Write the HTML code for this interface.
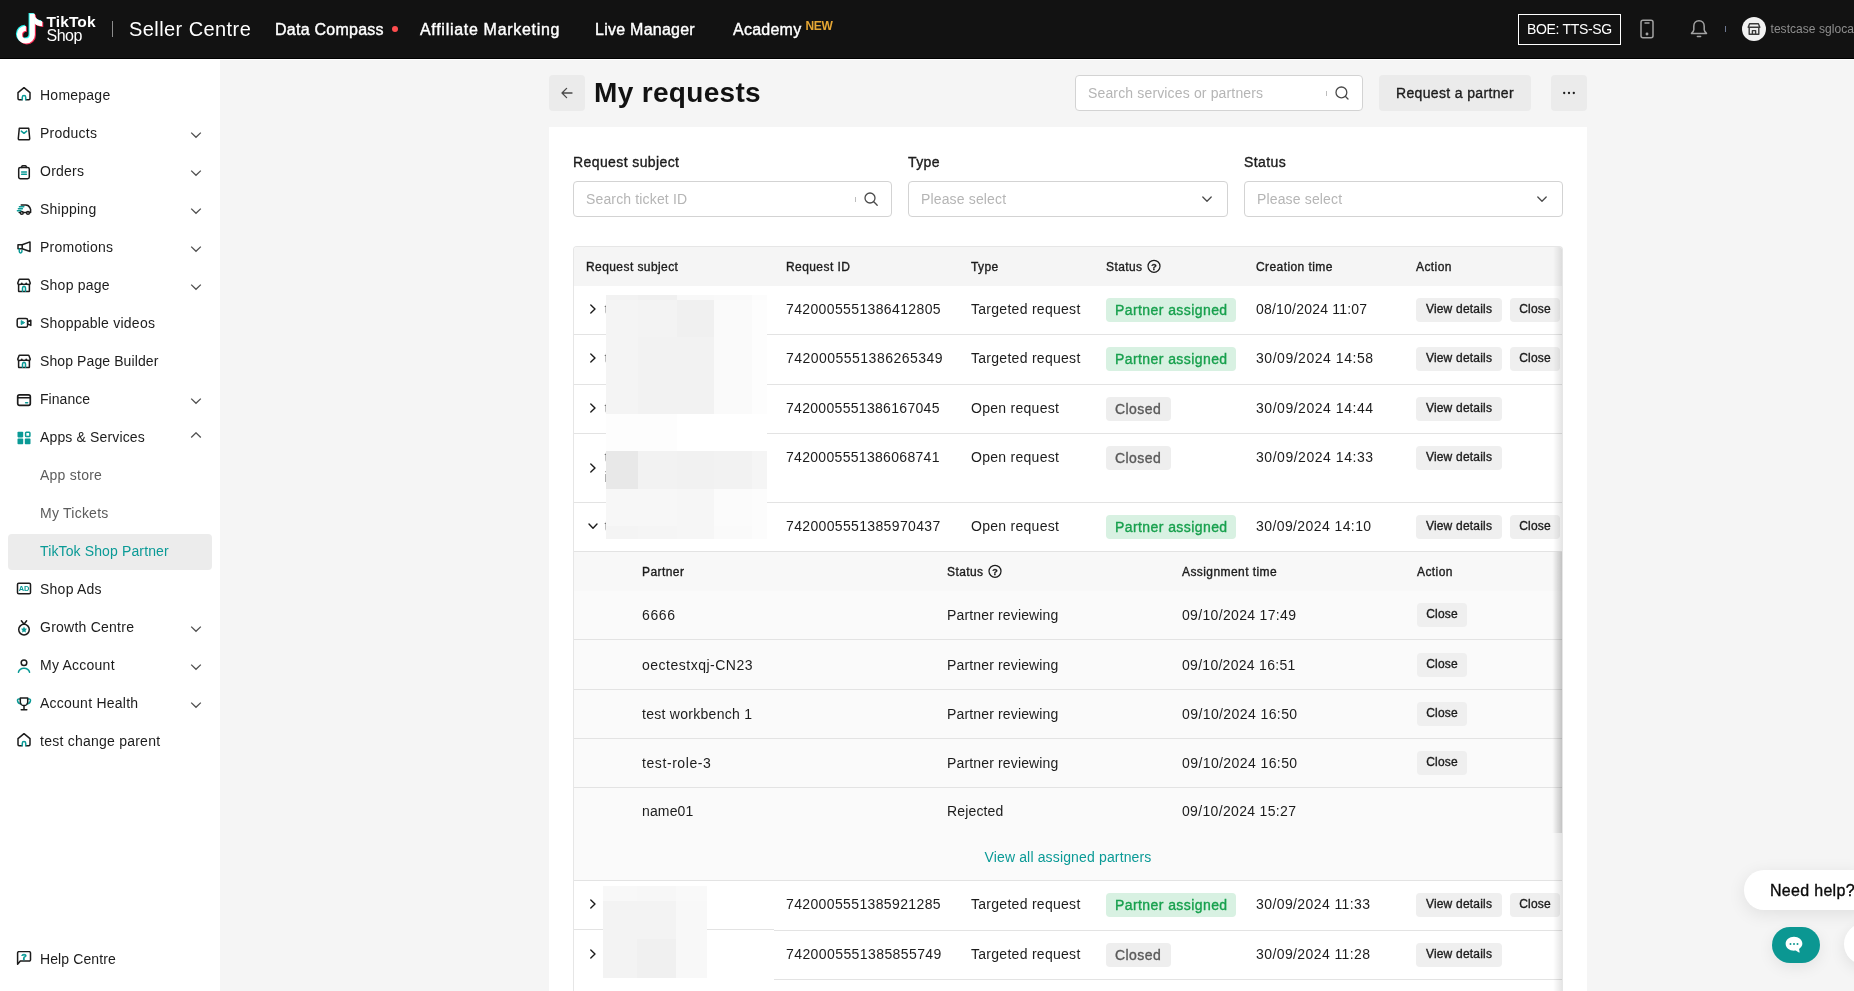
<!DOCTYPE html>
<html lang="en">
<head>
<meta charset="utf-8">
<title>My requests - TikTok Shop Seller Centre</title>
<style>
*{box-sizing:border-box;margin:0;padding:0}
html,body{width:1854px;height:991px;overflow:hidden;background:#f5f5f5}
body>div{will-change:transform}
body{font-family:"Liberation Sans",sans-serif;font-size:14px;color:#1c1c1c;position:relative}
.abs{position:absolute}
.m{-webkit-text-stroke:.35px currentColor}
/* header */
#hdr{position:absolute;left:0;top:0;width:1854px;height:59px;background:#121212;border-bottom:1px solid #000}
#hdr .t{position:absolute;color:#fff;white-space:nowrap}
/* sidebar */
#side{position:absolute;left:0;top:59px;width:220px;height:932px;background:#fff}
.si{position:absolute;left:0;width:220px;height:38px}
.si .lbl{position:absolute;left:40px;top:0;line-height:38px;font-size:14px;color:#1c1c1c;white-space:nowrap;letter-spacing:.1px}
.si svg.ic{position:absolute;left:16px;top:11px;width:16px;height:16px}
.si svg.ch{position:absolute;left:190px;top:14px;width:12px;height:12px}
.si.sub .lbl{color:#5c5c5c}
.si.sel{left:8px;width:204px;height:36px;margin-top:1.500px;background:#ececec;border-radius:4px}
.si.sel .lbl{left:32px;top:-.5px;line-height:36px;color:#0a9a96}
/* main */
#card{position:absolute;left:549px;top:127px;width:1038px;height:880px;background:#fff}
.btn{position:absolute;background:#ebebeb;border-radius:4px;color:#1c1c1c;text-align:center;white-space:nowrap}
.inp{position:absolute;background:#fff;border:1px solid #d3d3d3;border-radius:4px;height:36px}
.inp .ph{position:absolute;left:12px;top:0;line-height:34px;color:#b5b5b5;font-size:14px;white-space:nowrap;letter-spacing:.15px}
.flabel{position:absolute;top:153px;font-size:14px;line-height:18px;color:#1c1c1c;white-space:nowrap;letter-spacing:.4px}
/* table */
#tbl{position:absolute;left:573px;top:246px;width:990px;height:760px;border-left:1px solid #e6e6e6;border-right:1px solid #e6e6e6;border-top:1px solid #e6e6e6;border-radius:4px 4px 0 0;overflow:hidden;background:#fff}
.th{position:absolute;font-size:12px;line-height:16px;color:#1c1c1c;white-space:nowrap;letter-spacing:.42px}
.row{position:absolute;left:0;width:988px;border-bottom:1px solid #e3e3e3}
.c{position:absolute;white-space:nowrap;font-size:14px;line-height:20px;color:#1c1c1c}
.tag{position:absolute;height:24px;border-radius:4px;font-size:14px;line-height:24px;padding:0 8px 0 9px;white-space:nowrap;letter-spacing:.42px}
.tag.g{background:#d8f1e2;color:#17a04d}
.tag.x{background:#eeeeee;color:#5a5a5a;padding-right:9.500px}
.sb{position:absolute;height:24px;border-radius:4px;background:#efefef;font-size:12px;line-height:23px;color:#1c1c1c;text-align:center;white-space:nowrap;letter-spacing:.2px}
</style>
</head>
<body>
<div id="hdr">
<svg class="abs" style="left:14.250px;top:11.400px" width="31.800" height="35.500" viewBox="-2 -2 34 38">
<g fill="none" stroke-linecap="butt" stroke-linejoin="round" stroke-width="5.600">
<path id="nt" d="M17.5 1v22.300a6.800 6.800 0 1 1-6.800-6.800" stroke="#25f4ee" transform="translate(-1.1,-.9)"/>
<path d="M17.500 1v22.300a6.800 6.800 0 1 1-6.800-6.800" stroke="#fe2c55" transform="translate(1.1,.9)"/>
</g>
<path d="M19.800 1c.4 4.200 3.400 7.400 8.400 7.900v5.400c-3.400 0-6.400-1.200-8.400-3z" fill="#25f4ee" transform="translate(-1.1,-.9)"/>
<path d="M19.800 1c.4 4.200 3.400 7.400 8.400 7.900v5.400c-3.400 0-6.400-1.200-8.400-3z" fill="#fe2c55" transform="translate(1.100,.9)"/>
<path d="M17.500 1v22.300a6.800 6.800 0 1 1-6.800-6.800" stroke="#fff" fill="none" stroke-width="5.600"/>
<path d="M19.800 1c.4 4.200 3.400 7.400 8.400 7.900v5.400c-3.400 0-6.400-1.200-8.400-3z" fill="#fff"/>
</svg>
<div class="t" style="left:46.500px;top:13px;font-size:15.500px;line-height:17px;font-weight:bold;letter-spacing:.1px">TikTok</div>
<div class="t" style="left:46.500px;top:27px;font-size:16px;line-height:17px;letter-spacing:-.5px">Shop</div>
<div class="abs" style="left:112px;top:21px;width:1px;height:16px;background:#8c8c8c"></div>
<div class="t" style="left:129px;top:17px;font-size:20px;line-height:24px;letter-spacing:.42px">Seller Centre</div>
<div class="t" style="left:275px;top:20px;font-size:16px;line-height:20px;letter-spacing:.25px;-webkit-text-stroke:.4px #fff">Data Compass</div>
<div class="abs" style="left:392px;top:26px;width:6px;height:6px;border-radius:3px;background:#ff4d4f"></div>
<div class="t" style="left:420px;top:20px;font-size:16px;line-height:20px;letter-spacing:.7px;-webkit-text-stroke:.4px #fff">Affiliate Marketing</div>
<div class="t" style="left:595px;top:20px;font-size:16px;line-height:20px;letter-spacing:.25px;-webkit-text-stroke:.4px #fff">Live Manager</div>
<div class="t" style="left:733px;top:20px;font-size:16px;line-height:20px;letter-spacing:.25px;-webkit-text-stroke:.4px #fff">Academy</div>
<div class="t" style="left:805.500px;top:19.500px;font-size:12px;line-height:13px;font-weight:bold;color:#e5a634;letter-spacing:-.3px">NEW</div>
<div class="abs" style="left:1518px;top:14px;width:103px;height:31px;border:1px solid #fff"></div>
<div class="t" style="left:1527px;top:19px;font-size:14px;line-height:20px;letter-spacing:-.32px">BOE: TTS-SG</div>
<svg class="abs" style="left:1639px;top:19px" width="16" height="20" viewBox="0 0 16 20" fill="none" stroke="#a3a3a3" stroke-width="1.5"><rect x="2" y="1.2" width="12" height="17.6" rx="2"/><path d="M6 4h4" stroke-linecap="round"/><circle cx="8" cy="15" r=".7" fill="#a3a3a3"/></svg>
<svg class="abs" style="left:1689px;top:19px" width="20" height="20" viewBox="0 0 20 20" fill="none" stroke="#a3a3a3" stroke-width="1.5" stroke-linejoin="round" stroke-linecap="round"><path d="M10 1.800c-3.200 0-5.200 2.400-5.200 5.400v3.600c0 1.400-1.200 2.600-2.300 3.600h15c-1.100-1-2.300-2.200-2.300-3.600V7.200c0-3-2-5.400-5.200-5.400z"/><path d="M8.400 17.600h3.200"/></svg>
<div class="abs" style="left:1725px;top:26px;width:1px;height:6px;background:#6d7790"></div>
<div class="abs" style="left:1742px;top:17px;width:24px;height:24px;border-radius:12px;background:#f2f2f2"></div>
<svg class="abs" style="left:1747px;top:22px" width="14" height="14" viewBox="0 0 14 14" fill="none" stroke="#3a3a3a" stroke-width="1.4" stroke-linejoin="round"><path d="M2.200 6v6.300h9.600V6"/><path d="M1.200 5.300 2.600 1.700h8.800l1.400 3.600z"/><path d="M5.400 12.300V8.600h3.200v3.700"/></svg>
<div class="t" style="left:1770.500px;top:19px;font-size:12px;line-height:20px;color:#8e8e8e;letter-spacing:.05px">testcase sglocal</div>
</div>
<div id="side">
<div class="si" style="top:17px"><svg class="ic" style="top:10.2px" viewBox="0 0 16 16" fill="none" stroke="#1c1c1c" stroke-width="1.500" stroke-linecap="round" stroke-linejoin="round"><path d="M6 13.700H3.200a1.200 1.200 0 0 1-1.200-1.200V6.700L8 1.700l6 5v5.800a1.200 1.200 0 0 1-1.200 1.200H10"/><path d="M6.300 13.700v-2.500a1.700 1.700 0 0 1 3.400 0v2.500" stroke="#0a9a96"/></svg><span class="lbl" style="letter-spacing:0.24px">Homepage</span></div>
<div class="si" style="top:55px"><svg class="ic" style="top:12px" viewBox="0 0 16 16" fill="none" stroke="#1c1c1c" stroke-width="1.500" stroke-linecap="round" stroke-linejoin="round"><path d="M3.300 2.300h9.400l1 10.200a1.200 1.200 0 0 1-1.200 1.300h-9a1.200 1.200 0 0 1-1.200-1.300z"/><path d="M5.300 5.100 8 7.300l2.700-2.200" stroke="#0a9a96"/></svg><span class="lbl" style="letter-spacing:0.24px">Products</span><svg class="ch" viewBox="0 0 12 12" fill="none" stroke="#505050" stroke-width="1.300" stroke-linecap="butt" stroke-linejoin="miter"><path d="M1.200 4.600 6 9.300l4.800-4.700"/></svg></div>
<div class="si" style="top:93px"><svg class="ic" style="top:11.5px" viewBox="0 0 16 16" fill="none" stroke="#1c1c1c" stroke-width="1.500" stroke-linecap="round" stroke-linejoin="round"><rect x="2.700" y="3.400" width="10.600" height="11.400" rx="1.700"/><path d="M5.800 3.400V2.500a.8.800 0 0 1 .8-.8h2.800a.8.800 0 0 1 .8.800v.9"/><path d="M5.600 7.900h4.800M5.600 10.300h4.800" stroke="#0a9a96"/></svg><span class="lbl" style="letter-spacing:0.24px">Orders</span><svg class="ch" viewBox="0 0 12 12" fill="none" stroke="#505050" stroke-width="1.300" stroke-linecap="butt" stroke-linejoin="miter"><path d="M1.200 4.600 6 9.300l4.800-4.700"/></svg></div>
<div class="si" style="top:131px"><svg class="ic" style="top:11px" viewBox="0 0 16 16" fill="none" stroke="#1c1c1c" stroke-width="1.500" stroke-linecap="round" stroke-linejoin="round"><path d="M5.200 3.900h4.600c2.200 0 3.500 1.300 4.200 3l.6 1.700v2.900h-1.300M10.600 11.500H7.400M4.300 11.500H3.200"/><circle cx="5.800" cy="11.900" r="1.400"/><circle cx="12" cy="11.900" r="1.400"/><path d="M3.400 5.800h4.400M2.400 7.800h4M1.400 9.800h3.400" stroke="#0a9a96"/></svg><span class="lbl" style="letter-spacing:0.24px">Shipping</span><svg class="ch" viewBox="0 0 12 12" fill="none" stroke="#505050" stroke-width="1.300" stroke-linecap="butt" stroke-linejoin="miter"><path d="M1.200 4.600 6 9.300l4.800-4.700"/></svg></div>
<div class="si" style="top:169px"><svg class="ic" style="top:11px" viewBox="0 0 16 16" fill="none" stroke="#1c1c1c" stroke-width="1.500" stroke-linecap="round" stroke-linejoin="round"><path d="M2 5.800h4.200L14 2.900v9.600L6.200 9.800H2z"/><path d="M6.200 5.800v4"/><path d="M3.300 10v2.600a1.300 1.300 0 0 0 2.600 0v-1.200" stroke="#0a9a96"/></svg><span class="lbl" style="letter-spacing:0.24px">Promotions</span><svg class="ch" viewBox="0 0 12 12" fill="none" stroke="#505050" stroke-width="1.300" stroke-linecap="butt" stroke-linejoin="miter"><path d="M1.200 4.600 6 9.300l4.800-4.700"/></svg></div>
<div class="si" style="top:207px"><svg class="ic" style="top:11px" viewBox="0 0 16 16" fill="none" stroke="#1c1c1c" stroke-width="1.500" stroke-linecap="round" stroke-linejoin="round"><path d="M2.600 7.600v6.300a.7.700 0 0 0 .7.700h9.400a.7.700 0 0 0 .7-.7V7.600"/><path d="M1.700 6.300 3 2.700a.8.800 0 0 1 .7-.5h8.600a.8.800 0 0 1 .7.500l1.300 3.600c0 .6-.9 1.100-2 1.100s-2.100-.5-2.100-1.100c0 .6-1 1.100-2.200 1.100s-2.200-.5-2.200-1.100c0 .6-1 1.100-2.100 1.100s-2-.5-2-1.100z"/><path d="M6.500 14.300v-3.200a1.500 1.500 0 0 1 3 0v3.200" stroke="#0a9a96"/></svg><span class="lbl" style="letter-spacing:0.24px">Shop page</span><svg class="ch" viewBox="0 0 12 12" fill="none" stroke="#505050" stroke-width="1.300" stroke-linecap="butt" stroke-linejoin="miter"><path d="M1.200 4.600 6 9.300l4.800-4.700"/></svg></div>
<div class="si" style="top:245px"><svg class="ic" style="top:10.6px" viewBox="0 0 16 16" fill="none" stroke="#1c1c1c" stroke-width="1.500" stroke-linecap="round" stroke-linejoin="round"><rect x="1.200" y="3.400" width="10.400" height="8.800" rx="1.600"/><path d="M11.600 6.700l3.200-1.500v5.200l-3.200-1.500"/><path d="M5.200 6v3.600l3.100-1.800z" fill="#0a9a96" stroke="#0a9a96" stroke-width="1"/></svg><span class="lbl" style="letter-spacing:0.24px">Shoppable videos</span></div>
<div class="si" style="top:283px"><svg class="ic" style="top:11px" viewBox="0 0 16 16" fill="none" stroke="#1c1c1c" stroke-width="1.500" stroke-linecap="round" stroke-linejoin="round"><path d="M2.600 7.600v6.300a.7.700 0 0 0 .7.700h9.400a.7.700 0 0 0 .7-.7V7.600"/><path d="M1.700 6.300 3 2.700a.8.800 0 0 1 .7-.5h8.600a.8.800 0 0 1 .7.500l1.300 3.600c0 .6-.9 1.100-2 1.100s-2.100-.5-2.100-1.100c0 .6-1 1.100-2.200 1.100s-2.200-.5-2.200-1.100c0 .6-1 1.100-2.100 1.100s-2-.5-2-1.100z"/><path d="M6.500 14.300v-3.200a1.500 1.500 0 0 1 3 0v3.200" stroke="#0a9a96"/></svg><span class="lbl" style="letter-spacing:0.1px">Shop Page Builder</span></div>
<div class="si" style="top:321px"><svg class="ic" style="top:11.7px" viewBox="0 0 16 16" fill="none" stroke="#1c1c1c" stroke-width="1.500" stroke-linecap="round" stroke-linejoin="round"><rect x="1.700" y="2.800" width="12.600" height="10.600" rx="1.800" stroke-width="1.700"/><path d="M1.700 5.800h12.600" stroke-width="1.500"/><path d="M9.600 10.700h2" stroke="#0a9a96"/></svg><span class="lbl" style="letter-spacing:0.05px">Finance</span><svg class="ch" viewBox="0 0 12 12" fill="none" stroke="#505050" stroke-width="1.300" stroke-linecap="butt" stroke-linejoin="miter"><path d="M1.200 4.600 6 9.300l4.800-4.700"/></svg></div>
<div class="si" style="top:359px"><svg class="ic" style="top:12.400px" viewBox="0 0 16 16" fill="#0a9a96"><rect x="1.500" y="1.700" width="5.700" height="5.700" rx=".8"/><rect x="1.500" y="8.600" width="5.700" height="5.700" rx=".8"/><rect x="8.800" y="8.600" width="5.700" height="5.700" rx=".8"/><rect x="9.600" y="2.300" width="4.300" height="4.300" rx=".8" fill="none" stroke="#0a9a96" stroke-width="1.500"/></svg><span class="lbl" style="letter-spacing:0.15px">Apps &amp; Services</span><svg class="ch" viewBox="0 0 12 12" fill="none" stroke="#505050" stroke-width="1.300" stroke-linecap="butt" stroke-linejoin="miter"><path d="M1.200 5.500 6 .8l4.800 4.700"/></svg></div>
<div class="si sub" style="top:397px"><span class="lbl" style="letter-spacing:0.24px">App store</span></div>
<div class="si sub" style="top:435px"><span class="lbl" style="letter-spacing:0.24px">My Tickets</span></div>
<div class="si sel" style="top:473px"><span class="lbl" style="letter-spacing:0.13px">TikTok Shop Partner</span></div>
<div class="si" style="top:511px"><svg class="ic" style="top:11px" viewBox="0 0 16 16" fill="none" stroke="#1c1c1c" stroke-width="1.500" stroke-linecap="round" stroke-linejoin="round"><rect x="1.500" y="2.300" width="13" height="10.400" rx="1.300"/><text x="8" y="10.300" font-family="Liberation Sans,sans-serif" font-size="7.400" font-weight="bold" text-anchor="middle" fill="#0a9a96" stroke="none">AD</text></svg><span class="lbl" style="letter-spacing:0.24px">Shop Ads</span></div>
<div class="si" style="top:549px"><svg class="ic" style="top:12.3px" viewBox="0 0 16 16" fill="none" stroke="#1c1c1c" stroke-width="1.500" stroke-linecap="round" stroke-linejoin="round"><circle cx="8" cy="9.600" r="5.300"/><path d="M5.400 .8 8 4.200 10.600 .8"/><path d="M8 6.600l.95 1.900 2.100.3-1.500 1.500.35 2.100L8 11.400l-1.900 1 .35-2.100-1.500-1.500 2.100-.3z" fill="#0a9a96" stroke="none"/></svg><span class="lbl" style="letter-spacing:0.24px">Growth Centre</span><svg class="ch" viewBox="0 0 12 12" fill="none" stroke="#505050" stroke-width="1.300" stroke-linecap="butt" stroke-linejoin="miter"><path d="M1.200 4.600 6 9.300l4.800-4.700"/></svg></div>
<div class="si" style="top:587px"><svg class="ic" style="top:12.2px" viewBox="0 0 16 16" fill="none" stroke="#1c1c1c" stroke-width="1.500" stroke-linecap="round" stroke-linejoin="round"><circle cx="8" cy="4.800" r="2.800"/><path d="M2.400 14.300c.7-2.700 2.900-4.100 5.600-4.100s4.900 1.400 5.600 4.100" stroke="#0a9a96"/></svg><span class="lbl" style="letter-spacing:0.24px">My Account</span><svg class="ch" viewBox="0 0 12 12" fill="none" stroke="#505050" stroke-width="1.300" stroke-linecap="butt" stroke-linejoin="miter"><path d="M1.200 4.600 6 9.300l4.800-4.700"/></svg></div>
<div class="si" style="top:625px"><svg class="ic" style="top:12.3px" viewBox="0 0 16 16" fill="none" stroke="#1c1c1c" stroke-width="1.500" stroke-linecap="round" stroke-linejoin="round"><path d="M4.400 2.900H2.900c-1 0-1.500.7-1.400 1.700.2 1.700 1.300 2.900 3.300 3.100M11.600 2.900h1.500c1 0 1.500.7 1.400 1.700-.2 1.700-1.300 2.900-3.300 3.100" stroke="#0a9a96"/><path d="M4.300 2h7.400v3.900a3.700 3.700 0 0 1-7.400 0z"/><path d="M8 9.700v3.700M5.200 13.800h5.600"/></svg><span class="lbl" style="letter-spacing:0.24px">Account Health</span><svg class="ch" viewBox="0 0 12 12" fill="none" stroke="#505050" stroke-width="1.300" stroke-linecap="butt" stroke-linejoin="miter"><path d="M1.200 4.600 6 9.300l4.800-4.700"/></svg></div>
<div class="si" style="top:663px"><svg class="ic" style="top:10.2px" viewBox="0 0 16 16" fill="none" stroke="#1c1c1c" stroke-width="1.500" stroke-linecap="round" stroke-linejoin="round"><path d="M6 13.700H3.200a1.200 1.200 0 0 1-1.200-1.200V6.700L8 1.700l6 5v5.800a1.200 1.200 0 0 1-1.200 1.200H10"/><path d="M6.300 13.700v-2.500a1.700 1.700 0 0 1 3.400 0v2.500" stroke="#0a9a96"/></svg><span class="lbl" style="letter-spacing:0.24px">test change parent</span></div>
<div class="si" style="top:881px"><svg class="ic" style="top:11px" viewBox="0 0 16 16" fill="none" stroke="#1c1c1c" stroke-width="1.500" stroke-linecap="round" stroke-linejoin="round"><path d="M1.600 13.300V2a1.400 1.400 0 0 1 1.400-1.400h10.100a1.400 1.400 0 0 1 1.400 1.400v6.700a1.400 1.400 0 0 1-1.400 1.400H4.300z"/><text x="7.900" y="9.100" font-family="Liberation Sans,sans-serif" font-size="9" font-weight="bold" text-anchor="middle" fill="#0a9a96" stroke="#0a9a96" stroke-width=".5">?</text></svg><span class="lbl">Help Centre</span></div>
</div>
<div id="main">
<div class="abs hdrline" style="left:220px;top:59px;width:1634px;height:1px;background:#fff"></div>
<div class="btn" style="left:549px;top:75px;width:36px;height:36px"><svg class="abs" style="left:11px;top:11px" width="14" height="14" viewBox="0 0 14 14" fill="none" stroke="#4a4a4a" stroke-width="1.300" stroke-linecap="round" stroke-linejoin="round"><path d="M12 7H2.200M6.600 2.400 2 7l4.600 4.600"/></svg></div>
<div class="abs" style="left:594px;top:76px;font-size:28px;line-height:34px;font-weight:bold;color:#121212;white-space:nowrap;letter-spacing:.33px">My requests</div>
<div class="inp" style="left:1075px;top:75px;width:288px"><span class="ph">Search services or partners</span><span class="abs" style="left:250px;top:15px;width:1px;height:5px;background:#bdbdbd"></span><svg class="abs" style="left:258px;top:9px" width="16" height="16" viewBox="0 0 16 16" fill="none" stroke="#4a4a4a" stroke-width="1.300" stroke-linecap="round"><circle cx="7.400" cy="7.400" r="5.400"/><path d="M11.500 11.500 14 14"/></svg></div>
<div class="btn m" style="left:1379px;top:75px;width:152px;height:36px;line-height:36px;font-size:14px;letter-spacing:.35px">Request a partner</div>
<div class="btn" style="left:1551px;top:75px;width:36px;height:36px"><svg class="abs" style="left:11px;top:16px" width="14" height="4" viewBox="0 0 14 4" fill="#1c1c1c"><circle cx="2.200" cy="2" r="1.150"/><circle cx="7" cy="2" r="1.150"/><circle cx="11.800" cy="2" r="1.150"/></svg></div>
<div id="card"></div>
<div class="flabel m" style="left:573px">Request subject</div>
<div class="flabel m" style="left:908px">Type</div>
<div class="flabel m" style="left:1244px">Status</div>
<div class="inp" style="left:573px;top:181px;width:319px"><span class="ph">Search ticket ID</span><span class="abs" style="left:281px;top:15px;width:1px;height:5px;background:#bdbdbd"></span><svg class="abs" style="left:289px;top:9px" width="16" height="16" viewBox="0 0 16 16" fill="none" stroke="#4a4a4a" stroke-width="1.300" stroke-linecap="round"><circle cx="7" cy="7" r="5"/><path d="M10.800 10.800 14.200 14.200"/></svg></div>
<div class="inp" style="left:908px;top:181px;width:320px"><span class="ph">Please select</span><svg class="abs" style="left:292px;top:11px" width="12" height="12" viewBox="0 0 12 12" fill="none" stroke="#4a4a4a" stroke-width="1.300" stroke-linecap="round" stroke-linejoin="round"><path d="M1.800 4 6 8.200 10.200 4"/></svg></div>
<div class="inp" style="left:1244px;top:181px;width:319px"><span class="ph">Please select</span><svg class="abs" style="left:291px;top:11px" width="12" height="12" viewBox="0 0 12 12" fill="none" stroke="#4a4a4a" stroke-width="1.300" stroke-linecap="round" stroke-linejoin="round"><path d="M1.800 4 6 8.200 10.200 4"/></svg></div>
<div id="tbl">
<div class="abs" style="left:0;top:0;width:988px;height:39px;background:#f5f5f5"></div>
<div class="th m" style="left:12px;top:12px">Request subject</div>
<div class="th m" style="left:212px;top:12px">Request ID</div>
<div class="th m" style="left:397px;top:12px">Type</div>
<div class="th m" style="left:532px;top:12px">Status</div>
<div class="th m" style="left:682px;top:12px">Creation time</div>
<div class="th m" style="left:842px;top:12px">Action</div>
<svg class="abs" style="left:572px;top:12px" width="16" height="16" viewBox="-1 -1 16 16" fill="none" stroke="#1c1c1c" stroke-width="1.250"><circle cx="7" cy="6.300" r="6"/><text x="7" y="9.500" font-family="Liberation Sans,sans-serif" font-size="9" font-weight="bold" text-anchor="middle" fill="#1c1c1c" stroke="#1c1c1c" stroke-width=".3">?</text></svg>
<div class="row" style="top:39px;height:49px">
<svg class="abs" style="left:14px;top:17px" width="10" height="12" viewBox="0 0 10 12" fill="none" stroke="#1c1c1c" stroke-width="1.400" stroke-linecap="round" stroke-linejoin="round"><path d="M2.800 2 7 6 2.800 10"/></svg>
<div class="c" style="left:30.5px;top:13px;color:#777">t</div>
<div class="c" style="left:212px;top:13px;letter-spacing:0.37px">7420005551386412805</div>
<div class="c" style="left:397px;top:13px;letter-spacing:.28px">Targeted request</div>
<div class="tag g m" style="left:532px;top:12px">Partner assigned</div>
<div class="c" style="left:682px;top:13px;letter-spacing:0.208px">08/10/2024 11:07</div>
<div class="sb m" style="left:842px;top:12px;width:86px">View details</div>
<div class="sb m" style="left:936px;top:12px;width:50px">Close</div>
</div>
<div class="row" style="top:88px;height:50px">
<svg class="abs" style="left:14px;top:17px" width="10" height="12" viewBox="0 0 10 12" fill="none" stroke="#1c1c1c" stroke-width="1.400" stroke-linecap="round" stroke-linejoin="round"><path d="M2.800 2 7 6 2.800 10"/></svg>
<div class="c" style="left:30.5px;top:13px;color:#777">t</div>
<div class="c" style="left:212px;top:13px;letter-spacing:0.476px">7420005551386265349</div>
<div class="c" style="left:397px;top:13px;letter-spacing:.28px">Targeted request</div>
<div class="tag g m" style="left:532px;top:12px">Partner assigned</div>
<div class="c" style="left:682px;top:13px;letter-spacing:0.533px">30/09/2024 14:58</div>
<div class="sb m" style="left:842px;top:12px;width:86px">View details</div>
<div class="sb m" style="left:936px;top:12px;width:50px">Close</div>
</div>
<div class="row" style="top:138px;height:49px">
<svg class="abs" style="left:14px;top:17px" width="10" height="12" viewBox="0 0 10 12" fill="none" stroke="#1c1c1c" stroke-width="1.400" stroke-linecap="round" stroke-linejoin="round"><path d="M2.800 2 7 6 2.800 10"/></svg>
<div class="c" style="left:30.5px;top:13px;color:#777">t</div>
<div class="c" style="left:212px;top:13px;letter-spacing:0.307px">7420005551386167045</div>
<div class="c" style="left:397px;top:13px;letter-spacing:.28px">Open request</div>
<div class="tag x m" style="left:532px;top:12px">Closed</div>
<div class="c" style="left:682px;top:13px;letter-spacing:0.533px">30/09/2024 14:44</div>
<div class="sb m" style="left:842px;top:12px;width:86px">View details</div>
</div>
<div class="row" style="top:187px;height:69px">
<svg class="abs" style="left:14px;top:28px" width="10" height="12" viewBox="0 0 10 12" fill="none" stroke="#1c1c1c" stroke-width="1.400" stroke-linecap="round" stroke-linejoin="round"><path d="M2.800 2 7 6 2.800 10"/></svg>
<div class="c" style="left:30.5px;top:13px;color:#777">t</div>
<div class="c" style="left:30.5px;top:33px;color:#777">i</div>
<div class="c" style="left:212px;top:13px;letter-spacing:0.307px">7420005551386068741</div>
<div class="c" style="left:397px;top:13px;letter-spacing:.28px">Open request</div>
<div class="tag x m" style="left:532px;top:12px">Closed</div>
<div class="c" style="left:682px;top:13px;letter-spacing:0.533px">30/09/2024 14:33</div>
<div class="sb m" style="left:842px;top:12px;width:86px">View details</div>
</div>
<div class="row" style="top:256px;height:49px">
<svg class="abs" style="left:13px;top:18px" width="12" height="10" viewBox="0 0 12 10" fill="none" stroke="#1c1c1c" stroke-width="1.400" stroke-linecap="round" stroke-linejoin="round"><path d="M2 3 6 7.200 10 3"/></svg>
<div class="c" style="left:30.5px;top:13px;color:#777">t</div>
<div class="c" style="left:212px;top:13px;letter-spacing:0.349px">7420005551385970437</div>
<div class="c" style="left:397px;top:13px;letter-spacing:.28px">Open request</div>
<div class="tag g m" style="left:532px;top:12px">Partner assigned</div>
<div class="c" style="left:682px;top:13px;letter-spacing:0.408px">30/09/2024 14:10</div>
<div class="sb m" style="left:842px;top:12px;width:86px">View details</div>
<div class="sb m" style="left:936px;top:12px;width:50px">Close</div>
</div>
<div class="row" style="top:634px;height:50px">
<svg class="abs" style="left:14px;top:17px" width="10" height="12" viewBox="0 0 10 12" fill="none" stroke="#1c1c1c" stroke-width="1.400" stroke-linecap="round" stroke-linejoin="round"><path d="M2.800 2 7 6 2.800 10"/></svg>
<div class="c" style="left:30.5px;top:13px;color:#777">t</div>
<div class="c" style="left:212px;top:13px;letter-spacing:0.37px">7420005551385921285</div>
<div class="c" style="left:397px;top:13px;letter-spacing:.28px">Targeted request</div>
<div class="tag g m" style="left:532px;top:12px">Partner assigned</div>
<div class="c" style="left:682px;top:13px;letter-spacing:0.408px">30/09/2024 11:33</div>
<div class="sb m" style="left:842px;top:12px;width:86px">View details</div>
<div class="sb m" style="left:936px;top:12px;width:50px">Close</div>
</div>
<div class="row" style="top:684px;height:49px">
<svg class="abs" style="left:14px;top:17px" width="10" height="12" viewBox="0 0 10 12" fill="none" stroke="#1c1c1c" stroke-width="1.400" stroke-linecap="round" stroke-linejoin="round"><path d="M2.800 2 7 6 2.800 10"/></svg>
<div class="c" style="left:30.5px;top:13px;color:#777">t</div>
<div class="c" style="left:212px;top:13px;letter-spacing:0.412px">7420005551385855749</div>
<div class="c" style="left:397px;top:13px;letter-spacing:.28px">Targeted request</div>
<div class="tag x m" style="left:532px;top:12px">Closed</div>
<div class="c" style="left:682px;top:13px;letter-spacing:0.408px">30/09/2024 11:28</div>
<div class="sb m" style="left:842px;top:12px;width:86px">View details</div>
</div>
<div class="abs" style="left:0;top:683px;width:200px;height:1px;background:#fff"></div>
<div class="abs" style="left:0;top:682px;width:200px;height:1px;background:#e3e3e3"></div>
<div class="abs" style="left:0;top:732px;width:200px;height:1px;background:#fff"></div>
<div class="abs" style="left:0;top:305px;width:988px;height:329px;background:#fafafa;border-bottom:1px solid #e3e3e3">
<div class="abs" style="left:0;top:0;width:988px;height:39px;background:#f8f8f8"></div>
<div class="th m" style="left:68px;top:12px">Partner</div>
<div class="th m" style="left:373px;top:12px">Status</div>
<div class="th m" style="left:608px;top:12px">Assignment time</div>
<div class="th m" style="left:843px;top:12px">Action</div>
<svg class="abs" style="left:413px;top:12px" width="16" height="16" viewBox="-1 -1 16 16" fill="none" stroke="#1c1c1c" stroke-width="1.250"><circle cx="7" cy="6.300" r="6"/><text x="7" y="9.500" font-family="Liberation Sans,sans-serif" font-size="9" font-weight="bold" text-anchor="middle" fill="#1c1c1c" stroke="#1c1c1c" stroke-width=".3">?</text></svg>
<div class="row" style="top:39px;height:49px;border-bottom:1px solid #e3e3e3;">
<div class="c" style="left:68px;top:14px;letter-spacing:0.65px">6666</div>
<div class="c" style="left:373px;top:14px;letter-spacing:.15px">Partner reviewing</div>
<div class="c" style="left:608px;top:14px;letter-spacing:0.333px">09/10/2024 17:49</div>
<div class="sb m" style="left:843px;top:12px;width:50px">Close</div>
</div>
<div class="row" style="top:88px;height:50px;border-bottom:1px solid #e3e3e3;">
<div class="c" style="left:68px;top:15px;letter-spacing:0.5px">oectestxqj-CN23</div>
<div class="c" style="left:373px;top:15px;letter-spacing:.15px">Partner reviewing</div>
<div class="c" style="left:608px;top:15px;letter-spacing:0.283px">09/10/2024 16:51</div>
<div class="sb m" style="left:843px;top:13px;width:50px">Close</div>
</div>
<div class="row" style="top:138px;height:49px;border-bottom:1px solid #e3e3e3;">
<div class="c" style="left:68px;top:14px;letter-spacing:0.28px">test workbench 1</div>
<div class="c" style="left:373px;top:14px;letter-spacing:.15px">Partner reviewing</div>
<div class="c" style="left:608px;top:14px;letter-spacing:0.408px">09/10/2024 16:50</div>
<div class="sb m" style="left:843px;top:12px;width:50px">Close</div>
</div>
<div class="row" style="top:187px;height:49px;border-bottom:1px solid #e3e3e3;">
<div class="c" style="left:68px;top:14px;letter-spacing:0.58px">test-role-3</div>
<div class="c" style="left:373px;top:14px;letter-spacing:.15px">Partner reviewing</div>
<div class="c" style="left:608px;top:14px;letter-spacing:0.408px">09/10/2024 16:50</div>
<div class="sb m" style="left:843px;top:12px;width:50px">Close</div>
</div>
<div class="row" style="top:236px;height:46px;border-bottom:0;">
<div class="c" style="left:68px;top:13px;letter-spacing:0.15px">name01</div>
<div class="c" style="left:373px;top:13px;letter-spacing:.15px">Rejected</div>
<div class="c" style="left:608px;top:13px;letter-spacing:0.333px">09/10/2024 15:27</div>
</div>
<div class="abs" style="left:978px;top:0;width:10px;height:281px;background:linear-gradient(to right,rgba(0,0,0,0),rgba(0,0,0,.13))"></div>
<div class="abs" style="left:0;top:295px;width:988px;text-align:center;font-size:14px;line-height:20px;color:#0a9a96;letter-spacing:.15px">View all assigned partners</div>
</div>
<div class="abs" style="left:32px;top:48px;width:32px;height:5px;background:#f2f2f2"></div>
<div class="abs" style="left:64px;top:48px;width:39px;height:5px;background:#f0f0f0"></div>
<div class="abs" style="left:103px;top:48px;width:37px;height:5px;background:#f8f8f8"></div>
<div class="abs" style="left:140px;top:48px;width:38px;height:5px;background:#f9f9f9"></div>
<div class="abs" style="left:178px;top:48px;width:15px;height:5px;background:#fcfcfc"></div>
<div class="abs" style="left:32px;top:53px;width:32px;height:37px;background:#f4f4f4"></div>
<div class="abs" style="left:64px;top:53px;width:39px;height:37px;background:#f3f3f3"></div>
<div class="abs" style="left:103px;top:53px;width:37px;height:37px;background:#f0f0f0"></div>
<div class="abs" style="left:140px;top:53px;width:38px;height:37px;background:#fafafa"></div>
<div class="abs" style="left:178px;top:53px;width:15px;height:37px;background:#fdfdfd"></div>
<div class="abs" style="left:32px;top:90px;width:32px;height:40px;background:#f4f4f4"></div>
<div class="abs" style="left:64px;top:90px;width:39px;height:40px;background:#f2f2f2"></div>
<div class="abs" style="left:103px;top:90px;width:37px;height:40px;background:#f2f2f2"></div>
<div class="abs" style="left:140px;top:90px;width:38px;height:40px;background:#fafafa"></div>
<div class="abs" style="left:178px;top:90px;width:15px;height:40px;background:#fdfdfd"></div>
<div class="abs" style="left:32px;top:130px;width:32px;height:37px;background:#f4f4f4"></div>
<div class="abs" style="left:64px;top:130px;width:39px;height:37px;background:#f2f2f2"></div>
<div class="abs" style="left:103px;top:130px;width:37px;height:37px;background:#f2f2f2"></div>
<div class="abs" style="left:140px;top:130px;width:38px;height:37px;background:#fafafa"></div>
<div class="abs" style="left:178px;top:130px;width:15px;height:37px;background:#fdfdfd"></div>
<div class="abs" style="left:32px;top:167px;width:32px;height:37px;background:#fdfdfd"></div>
<div class="abs" style="left:64px;top:167px;width:39px;height:37px;background:#fdfdfd"></div>
<div class="abs" style="left:103px;top:167px;width:37px;height:37px;background:#fff"></div>
<div class="abs" style="left:140px;top:167px;width:38px;height:37px;background:#fff"></div>
<div class="abs" style="left:178px;top:167px;width:15px;height:37px;background:#fff"></div>
<div class="abs" style="left:32px;top:204px;width:32px;height:38px;background:#e8e8e8"></div>
<div class="abs" style="left:64px;top:204px;width:39px;height:38px;background:#f2f2f2"></div>
<div class="abs" style="left:103px;top:204px;width:37px;height:38px;background:#f1f1f1"></div>
<div class="abs" style="left:140px;top:204px;width:38px;height:38px;background:#f2f2f2"></div>
<div class="abs" style="left:178px;top:204px;width:15px;height:38px;background:#f5f5f5"></div>
<div class="abs" style="left:32px;top:242px;width:32px;height:37px;background:#f7f7f7"></div>
<div class="abs" style="left:64px;top:242px;width:39px;height:37px;background:#f7f7f7"></div>
<div class="abs" style="left:103px;top:242px;width:37px;height:37px;background:#f6f6f6"></div>
<div class="abs" style="left:140px;top:242px;width:38px;height:37px;background:#fbfbfb"></div>
<div class="abs" style="left:178px;top:242px;width:15px;height:37px;background:#fcfcfc"></div>
<div class="abs" style="left:32px;top:279px;width:32px;height:13px;background:#f4f4f4"></div>
<div class="abs" style="left:64px;top:279px;width:39px;height:13px;background:#f5f5f5"></div>
<div class="abs" style="left:103px;top:279px;width:37px;height:13px;background:#f6f6f6"></div>
<div class="abs" style="left:140px;top:279px;width:38px;height:13px;background:#fafafa"></div>
<div class="abs" style="left:178px;top:279px;width:15px;height:13px;background:#fcfcfc"></div>
<div class="abs" style="left:29px;top:639px;width:34px;height:15px;background:#f8f8f8"></div>
<div class="abs" style="left:63px;top:639px;width:39px;height:15px;background:#f7f7f7"></div>
<div class="abs" style="left:102px;top:639px;width:31px;height:15px;background:#f9f9f9"></div>
<div class="abs" style="left:29px;top:654px;width:34px;height:38px;background:#f3f3f3"></div>
<div class="abs" style="left:63px;top:654px;width:39px;height:38px;background:#f3f3f3"></div>
<div class="abs" style="left:102px;top:654px;width:31px;height:38px;background:#f8f8f8"></div>
<div class="abs" style="left:29px;top:692px;width:34px;height:39px;background:#f3f3f3"></div>
<div class="abs" style="left:63px;top:692px;width:39px;height:39px;background:#f0f0f0"></div>
<div class="abs" style="left:102px;top:692px;width:31px;height:39px;background:#f8f8f8"></div>
<div class="abs" style="left:979px;top:0;width:9px;height:760px;background:linear-gradient(to right,rgba(0,0,0,0),rgba(0,0,0,.1))"></div>
</div>
<div class="abs" style="left:1744px;top:870px;width:130px;height:40px;border-radius:20px 20px 0 20px;background:#fff;box-shadow:0 4px 18px rgba(0,0,0,.09)"></div>
<div class="abs m" style="left:1770px;top:881px;font-size:16px;line-height:20px;color:#0a0a0a;white-space:nowrap;letter-spacing:.3px">Need help?</div>
<div class="abs" style="left:1772px;top:927px;width:48px;height:36px;border-radius:18px;background:#0b9792;box-shadow:0 4px 16px rgba(0,0,0,.08)"></div>
<svg class="abs" style="left:1783px;top:934px" width="22" height="22" viewBox="0 0 20 20"><path d="M10 2.500c-4.300 0-7.600 2.800-7.600 6.400 0 3.500 3.300 6.300 7.600 6.300.5 0 1-.04 1.500-.13l3 1.800c.3.200.7-.1.600-.5l-.5-2.800c1.800-1.200 3-2.900 3-4.700 0-3.600-3.300-6.400-7.600-6.400z" fill="#fff"/><circle cx="6.800" cy="9" r=".9" fill="#0f9690"/><circle cx="10" cy="9" r=".9" fill="#0f9690"/><circle cx="13.200" cy="9" r=".9" fill="#0f9690"/></svg>
<div class="abs" style="left:1844px;top:923px;width:42px;height:42px;border-radius:21px;background:#fff;box-shadow:0 4px 16px rgba(0,0,0,.09)"></div>
</div>
</body>
</html>
